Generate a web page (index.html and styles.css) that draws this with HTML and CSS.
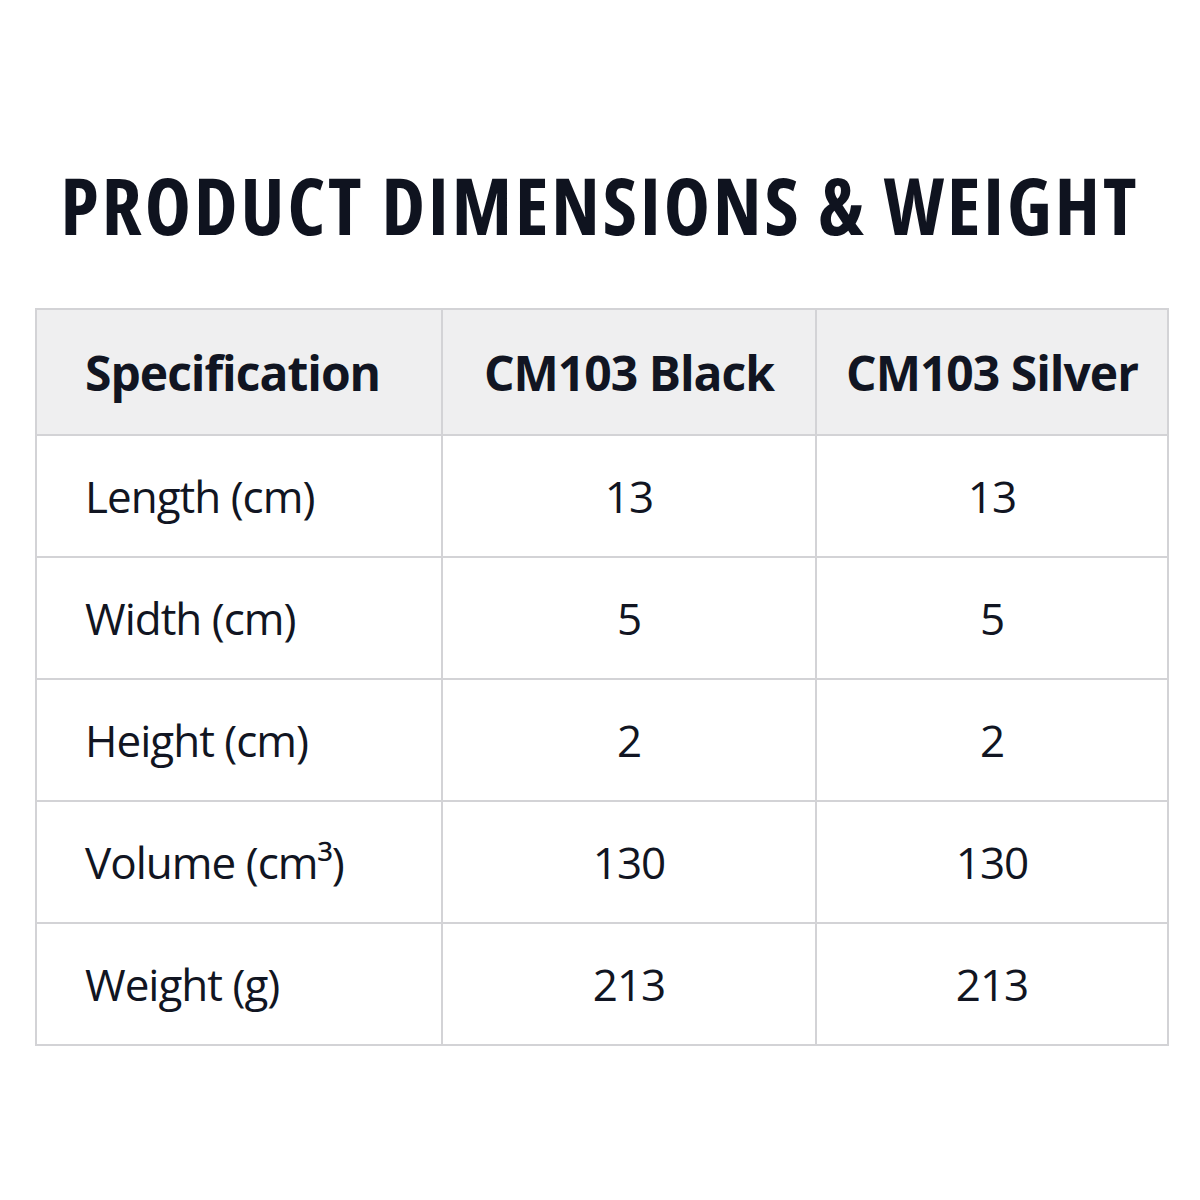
FILE: index.html
```html
<!DOCTYPE html>
<html>
<head>
<meta charset="utf-8">
<link rel="stylesheet" href="styles.css">
</head>
<body>
<main class="page">
  <h1 class="title">PRODUCT DIMENSIONS &amp; WEIGHT</h1>
  <table class="specs">
    <colgroup>
      <col class="c1"><col class="c2"><col class="c3">
    </colgroup>
    <thead>
      <tr><th class="label">Specification</th><th>CM103 Black</th><th>CM103 Silver</th></tr>
    </thead>
    <tbody>
      <tr><td class="label">Length (cm)</td><td>13</td><td>13</td></tr>
      <tr><td class="label">Width (cm)</td><td>5</td><td>5</td></tr>
      <tr><td class="label">Height (cm)</td><td>2</td><td>2</td></tr>
      <tr><td class="label">Volume (cm³)</td><td>130</td><td>130</td></tr>
      <tr><td class="label">Weight (g)</td><td>213</td><td>213</td></tr>
    </tbody>
  </table>
</main>
</body>
</html>
```
FILE: styles.css
```css
html, body {
  margin: 0;
  padding: 0;
  background: #ffffff;
}
body {
  font-family: "Open Sans", "Noto Sans", sans-serif;
  color: #111522;
}
.page {
  width: 1200px;
  height: 1200px;
  padding-top: 160px;
  box-sizing: border-box;
}
.title {
  margin: 0 0 58px 0;
  text-align: center;
  font-size: 78px;
  font-weight: 700;
  font-stretch: 75%;
  letter-spacing: 3px;
  line-height: 90px;
  color: #0f131f;
}
.specs {
  margin-left: 35px;
  width: 1132px;
  border-collapse: collapse;
  table-layout: fixed;
}
.c1 { width: 406px; }
.c2 { width: 374px; }
.c3 { width: 352px; }
.specs th, .specs td {
  border: 2px solid #d3d3d6;
  text-align: center;
  vertical-align: middle;
  padding: 0;
}
.specs th {
  height: 124px;
  background: #efeff0;
  font-size: 48px;
  font-weight: 700;
  letter-spacing: -1px;
}
.specs td {
  height: 120px;
  font-size: 44px;
  font-weight: 400;
  letter-spacing: -1px;
}
.specs .label {
  text-align: left;
  padding-left: 48px;
}
```
